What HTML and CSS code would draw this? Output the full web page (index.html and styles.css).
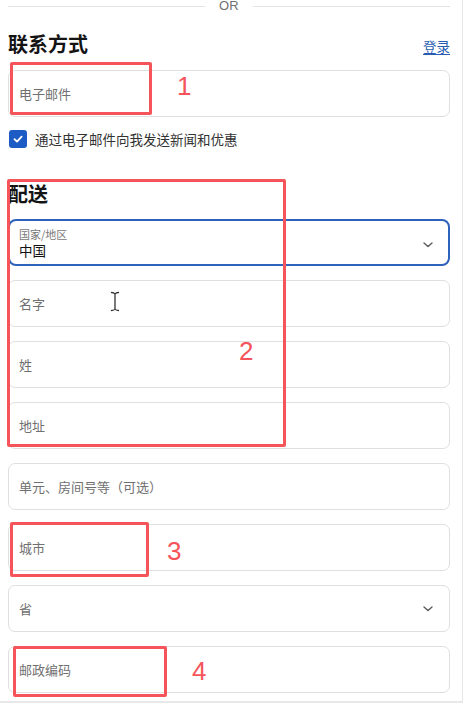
FILE: index.html
```html
<!DOCTYPE html>
<html lang="zh">
<head>
<meta charset="utf-8">
<title>结账</title>
<link rel="stylesheet" href="styles.css">
</head>
<body>
<div class="page">
  <div class="divider"><span class="line"></span><span class="or">OR</span><span class="line"></span></div>

  <div class="section-head">
    <h2 class="title">联系方式</h2>
    <a class="login" href="#">登录</a>
  </div>
  <div class="field"><span class="ph">电子邮件</span></div>

  <label class="check">
    <span class="box"><svg width="12" height="12" viewBox="0 0 12 12"><path d="M2.5 6.2 L5 8.6 L9.6 3.6" fill="none" stroke="#fff" stroke-width="1.8" stroke-linecap="round" stroke-linejoin="round"/></svg></span>
    <span class="check-text">通过电子邮件向我发送新闻和优惠</span>
  </label>

  <h2 class="title ship">配送</h2>

  <div class="fields">
    <div class="field select active">
      <div class="stack">
        <span class="lbl">国家/地区</span>
        <span class="val">中国</span>
      </div>
      <svg class="chev" width="10" height="6" viewBox="0 0 10 6"><path d="M1 1 L5 4.6 L9 1" fill="none" stroke="#5a5a5a" stroke-width="1.4" stroke-linecap="round" stroke-linejoin="round"/></svg>
    </div>
    <div class="field cursor-host"><span class="ph">名字</span>
      <svg class="ibeam" width="10" height="21" viewBox="0 0 10 21"><path d="M1.5 1.5 Q4 1.5 5 3 Q6 1.5 8.5 1.5 M5 3 V18 M1.5 19.5 Q4 19.5 5 18 Q6 19.5 8.5 19.5" fill="none" stroke="#fff" stroke-width="3" stroke-linecap="round"/><path d="M1.5 1.5 Q4 1.5 5 3 Q6 1.5 8.5 1.5 M5 3 V18 M1.5 19.5 Q4 19.5 5 18 Q6 19.5 8.5 19.5" fill="none" stroke="#333" stroke-width="1.3" stroke-linecap="round"/></svg>
    </div>
    <div class="field"><span class="ph">姓</span></div>
    <div class="field"><span class="ph">地址</span></div>
    <div class="field"><span class="ph">单元、房间号等（可选）</span></div>
    <div class="field"><span class="ph">城市</span></div>
    <div class="field select"><span class="ph">省</span>
      <svg class="chev" width="10" height="6" viewBox="0 0 10 6"><path d="M1 1 L5 4.6 L9 1" fill="none" stroke="#5a5a5a" stroke-width="1.4" stroke-linecap="round" stroke-linejoin="round"/></svg>
    </div>
    <div class="field"><span class="ph">邮政编码</span></div>
  </div>

  <div class="mark m1"></div><span class="num n1">1</span>
  <div class="mark m2"></div><span class="num n2">2</span>
  <div class="mark m3"></div><span class="num n3">3</span>
  <div class="mark m4"></div><span class="num n4">4</span>
</div>
</body>
</html>
```

FILE: styles.css
```css
* { box-sizing: border-box; }
html, body { margin: 0; padding: 0; background: #fff; }
body { font-family: "Noto Sans CJK SC", "Noto Sans", sans-serif; color: #1a1a1a; }

.page {
  position: relative;
  width: 463px;
  padding: 0 12px 8px 8px;
  border-right: 1px solid #e6e6e6;
  border-bottom: 2px solid #e8e8e8;
  overflow: hidden;
}

.divider { display: flex; align-items: center; height: 12px; gap: 14px; }
.divider .line { flex: 1; height: 1px; background: #e3e3e3; }
.divider .or { font-family: "Liberation Sans", "Noto Sans", sans-serif; font-size: 13px; line-height: 12px; color: #707070; letter-spacing: 0.3px; }

.section-head { display: flex; justify-content: space-between; align-items: center; margin-top: 18px; height: 28px; }
.title { margin: 0; font-size: 20px; line-height: 28px; font-weight: 700; color: #141414; }
.login { font-size: 13.5px; line-height: 18px; color: #2a5db0; text-decoration: underline; text-underline-offset: 2px; margin-top: 4px; }

.field {
  position: relative;
  display: flex;
  align-items: center;
  height: 47px;
  padding: 0 16px 0 10px;
  border: 1px solid #dfdfdf;
  border-radius: 7px;
  background: #fff;
}
.section-head + .field { margin-top: 12px; }
.ph { font-size: 13px; color: #707070; }

.check { display: flex; align-items: center; gap: 8px; margin-top: 13px; height: 18px; }
.check .box { width: 18px; height: 18px; margin-left: 1px; border-radius: 3px; background: #1d5cc5; display: flex; align-items: center; justify-content: center; }
.check-text { font-size: 13.5px; line-height: 18px; color: #333; }

.ship { margin-top: 32px; }

.fields { display: flex; flex-direction: column; gap: 14px; margin-top: 11px; }
.select { justify-content: space-between; }
.active { border: 2px solid #2d62bd; border-radius: 8px; padding-left: 9px; align-items: flex-start; padding-top: 6px; }
.stack { display: flex; flex-direction: column; }
.lbl { font-size: 11px; line-height: 14px; color: #777; }
.val { font-size: 13.5px; line-height: 18px; color: #111; }
.active .chev { margin-top: 15px; margin-right: -1px; }

.ibeam { position: absolute; left: 101px; top: 10px; }

.mark { position: absolute; border: 3px solid #f4545a; border-radius: 2px; }
.num { position: absolute; font-family: "Liberation Sans", sans-serif; font-size: 26px; line-height: 26px; color: #f4545a; }
.m1 { left: 10px; top: 62px; width: 142px; height: 53px; }
.n1 { left: 177px; top: 73px; }
.m2 { left: 7px; top: 179px; width: 279px; height: 268px; }
.n2 { left: 239px; top: 338px; }
.m3 { left: 10px; top: 522px; width: 139px; height: 55px; }
.n3 { left: 167px; top: 538px; }
.m4 { left: 13px; top: 646px; width: 154px; height: 51px; }
.n4 { left: 192px; top: 658px; }
```
